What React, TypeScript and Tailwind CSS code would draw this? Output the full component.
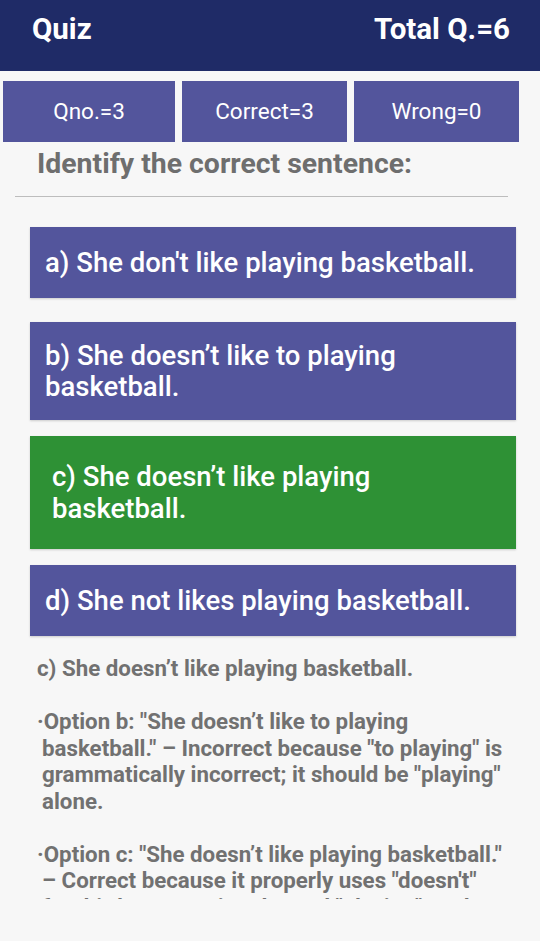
import React from "react";

const optBase =
  "ml-[30px] w-[486px] flex items-center text-white text-[27.5px] leading-[31px] font-medium shadow-[0_1px_2px_rgba(0,0,0,0.18)]";

export default function App() {
  return (
    <div
      className="w-[540px] h-[941px] bg-[#f7f7f7] overflow-hidden flex flex-col"
      style={{ fontFamily: "Roboto, 'Noto Sans', sans-serif" }}
    >
      <div className="h-[71px] bg-[#1f2b67] flex items-center justify-between pl-[32px] pr-[30px] pb-[12px] shrink-0">
        <span className="text-white text-[29.5px] font-bold">Quiz</span>
        <span className="text-white text-[29.5px] font-bold">Total Q.=6</span>
      </div>

      <div className="mt-[10px] ml-[3px] grid grid-cols-[172px_165px_165px] gap-[7px] h-[61px] shrink-0">
        <div className="bg-[#53559c] flex items-center justify-center text-white text-[22.5px]">Qno.=3</div>
        <div className="bg-[#53559c] flex items-center justify-center text-white text-[22.5px]">Correct=3</div>
        <div className="bg-[#53559c] flex items-center justify-center text-white text-[22.5px]">Wrong=0</div>
      </div>

      <div className="pl-[37px] mt-[5px] text-[28.4px] leading-[34px] font-bold text-[#6e6e6e] shrink-0">
        Identify the correct sentence:
      </div>

      <div className="ml-[15px] w-[493px] h-px bg-[#bdbdbd] mt-[15px] shrink-0" />

      <div className="mt-[30px] flex flex-col shrink-0">
        <div className={`${optBase} h-[71px] px-[15px] bg-[#53559c]`}>a) She don't like playing basketball.</div>
        <div className={`${optBase} mt-[24px] h-[98px] px-[15px] bg-[#53559c]`}>
          b) She doesn’t like to playing basketball.
        </div>
        <div className={`${optBase} mt-[16px] h-[113px] pl-[22px] pr-[120px] leading-[32px] bg-[#2e9135]`}>
          c) She doesn’t like playing basketball.
        </div>
        <div className={`${optBase} mt-[16px] h-[71px] px-[15px] bg-[#53559c]`}>d) She not likes playing basketball.</div>
      </div>

      <div className="mt-[19px] ml-[37px] w-[490px] h-[244px] overflow-hidden text-[22.3px] leading-[26.5px] font-bold text-[#717171] whitespace-nowrap shrink-0">
        <p>c) She doesn’t like playing basketball.</p>
        <p className="mt-[26.5px] pl-[5px] -indent-[5px]">
          ·Option b: "She doesn’t like to playing
          <br />
          basketball." – Incorrect because "to playing" is
          <br />
          grammatically incorrect; it should be "playing"
          <br />
          alone.
        </p>
        <p className="mt-[26.5px] pl-[5px] -indent-[5px]">
          ·Option c: "She doesn’t like playing basketball."
          <br />
          – Correct because it properly uses "doesn't"
          <br />
          for third-person singular and "playing" as the
          <br />
          gerund.
        </p>
      </div>
    </div>
  );
}
